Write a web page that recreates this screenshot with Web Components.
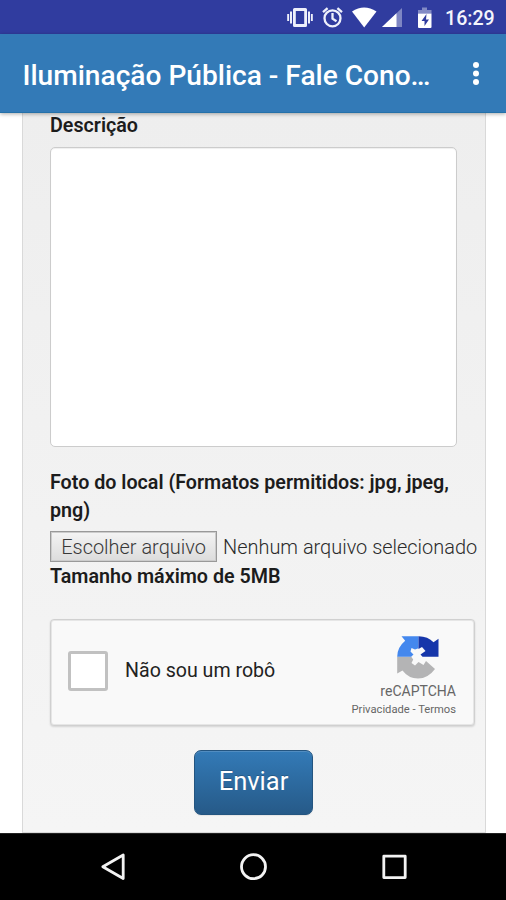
<!DOCTYPE html>
<html lang="pt-BR">
<head>
<meta charset="utf-8">
<title>Iluminação Pública - Fale Conosco</title>
<style>
body{margin:0;width:506px;height:900px;overflow:hidden;background:#fff;font-family:Roboto,"Liberation Sans",sans-serif}
</style>
</head>
<body>
<phone-screen>
  <status-bar slot="status" time="16:29"></status-bar>
  <app-bar slot="appbar">Iluminação Pública - Fale Cono…</app-bar>
  <form-panel>
    <field-label class="first">Descrição</field-label>
    <text-area></text-area>
    <field-label class="photo">Foto do local (Formatos permitidos: jpg, jpeg, png)</field-label>
    <file-picker button="Escolher arquivo">Nenhum arquivo selecionado</file-picker>
    <field-label class="hint">Tamanho máximo de 5MB</field-label>
    <captcha-box>Não sou um robô</captcha-box>
    <submit-button>Enviar</submit-button>
  </form-panel>
  <nav-bar slot="nav"></nav-bar>
</phone-screen>
<script>
const define = (name, html) => customElements.define(name, class extends HTMLElement {
  constructor() {
    super();
    this.attachShadow({mode: 'open'}).innerHTML = html;
  }
  connectedCallback() {
    this.shadowRoot.querySelectorAll('[data-attr]').forEach(e => {
      e.textContent = this.getAttribute(e.dataset.attr);
    });
  }
});

define('phone-screen', `<style>
:host{display:grid;grid-template-rows:34px 78.5px 720.5px 67px;width:506px;height:900px}
main{overflow:hidden;background:#fff;padding:0 20px 0 22px;box-sizing:border-box}
</style><slot name="status"></slot><slot name="appbar"></slot><main><slot></slot></main><slot name="nav"></slot>`);

define('status-bar', `<style>
:host{display:flex;align-items:center;justify-content:flex-end;background:#303c9f;color:#f4f5fc;padding-right:11px;box-sizing:border-box}
svg{display:block;flex:none}
span{font-size:19.6px;font-weight:500;line-height:34px;width:50px;white-space:nowrap;margin-top:3px}
</style>
<svg width="160" height="34" viewBox="280 0 160 34">
<g fill="#eef0fb">
<path fill-rule="evenodd" d="M294.500 8h11q1.500 0 1.500 1.500v16q0 1.500-1.500 1.500h-11q-1.500 0-1.500-1.500v-16q0-1.500 1.500-1.500zM295.800 11v13h8.400v-13z"/>
<path d="M290 11.500h2v12h-2zM287.200 14h1.900v7h-1.900zM308 11.500h2v12h-2zM310.900 14h1.900v7h-1.900z"/>
</g>
<g fill="none" stroke="#eef0fb" stroke-width="2.300"><circle cx="332.500" cy="18.300" r="8"/><path d="M332.500 13v5.600l4 2.600M323 12.200l4.600-4M342 12.200l-4.600-4"/></g>
<path fill="#fff" d="M352 11.500Q364 3.500 376.500 11.500L364.200 27.500z"/>
<path fill="#fff" opacity=".38" d="M382 27L402 8v19z"/>
<path fill="#fff" d="M382 27L396.500 13.200V27z"/>
<path fill="#fff" opacity=".4" d="M418 13.500v-3.500h4v-2.500h5v2.500h4.500v3.500z"/>
<path fill="#fff" fill-rule="evenodd" d="M418 13.500h13.500v13.500q0 1-1 1h-11.500q-1 0-1-1zM426.500 14l-5 7h3v5l4.500-6.500h-3z"/>
</svg><span style="margin-left:5px" data-attr="time"></span>`);

define('app-bar', `<style>
:host{display:flex;align-items:center;justify-content:space-between;background:#337ab7;color:#fff;padding:0 27px 0 22.5px;box-sizing:border-box;border-bottom:1.500px solid #2571a9;box-shadow:0 1px 4px #0005;position:relative;z-index:1}
h1{margin:6px 0 0;font-size:28.100px;font-weight:500;white-space:nowrap}
svg{display:block}
</style><h1><slot></slot></h1>
<svg width="6" height="24" viewBox="0 0 6 24" fill="#fff"><circle cx="3" cy="4" r="3"/><circle cx="3" cy="12.500" r="3"/><circle cx="3" cy="21" r="3"/></svg>`);

define('form-panel', `<style>
:host{display:flex;flex-direction:column;box-sizing:border-box;width:464px;height:720.5px;padding:0 0 0 27px;background:linear-gradient(#eee,#f5f5f5);border:solid #d9d9d9;border-width:0 1.500px 1px}
::slotted(.first){margin:-1px 0 1px}
::slotted(.photo){padding-top:22px;margin-bottom:-1px;width:410px}
::slotted(.hint){padding-top:1px;margin-bottom:-1px}
</style><slot></slot>`);

define('field-label', `<style>
:host{display:block;font-size:19.700px;font-weight:600;line-height:28px;color:#1c1c1c}
</style><slot></slot>`);

define('text-area', `<style>
:host{display:block;box-sizing:border-box;width:407px;height:300px;margin-top:6px;background:#fff;border:1.500px solid #ccc;border-radius:5px;box-shadow:inset 0 1px 1px #0001}
</style>`);

define('file-picker', `<style>
:host{display:flex;align-items:center;gap:6px;height:30px;margin-top:8px;font-size:19.950px;font-weight:300;color:#2b2b2b;white-space:nowrap}
button{box-sizing:border-box;width:167px;height:31px;padding:0;border:1px solid #999;box-shadow:inset 0 0 0 1px #ccc;background:linear-gradient(#f4f4f4,#dcdcdc);font:inherit;color:#383838}
</style><button data-attr="button"></button><span><slot></slot></span>`);

define('captcha-box', `<style>
:host{display:flex;box-sizing:border-box;width:425px;height:107px;margin-top:29px;background:#f9f9f9;border:1px solid #d0d0d0;border-radius:4px;box-shadow:inset 0 0 0 1px #e6e6e6,0 1px 2px #0002;padding:0 18px 0 17px;align-items:center}
i{box-sizing:border-box;width:40px;height:40px;margin-top:-3px;border:3px solid #c1c1c1;border-radius:3px;background:#fff}
span{font-size:19.6px;color:#222;margin:-4px 0 0 17px;white-space:nowrap}
div{display:flex;flex-direction:column;align-items:flex-end;margin-left:auto;height:100%;color:#666}
svg{margin:15px 16px 0 0}
b{font-weight:400;font-size:14px;line-height:16px;margin-top:4px}
small{font-size:11.200px;line-height:13px;margin-top:4px;white-space:nowrap}
</style><i></i><span><slot></slot></span>
<div><svg width="44" height="44" viewBox="396 635 44 44">
<path fill="#b4b4b5" d="M397.200 656.800h14l2 2.700-1.700 3.500 3.500 2.500 3.500-3.500 5 3 2.500-4 9 8Q428 678.500 418 678.500 408.500 678.500 402.500 670.500l-5.300 3z"/>
<path fill="#4488ee" d="M401.500 636.300h17v12l-3.500 1.200-3.500-1.500-1 3.500 3 3-2.300 2.300h-14q0-9.500 8-16z"/>
<path fill="#1636aa" d="M418.500 636.300q9.500 0 15 6l5-3.500v18h-16l-2-2.300 5-3.500-3.500-4-3.500 2z"/>
</svg><b>reCAPTCHA</b><small>Privacidade - Termos</small></div>`);

define('submit-button', `<style>
:host{display:block;margin:24px 0 0 144px}
button{box-sizing:border-box;width:119px;height:65px;padding:0 0 3px;border:1.500px solid #245580;border-radius:7px;background:linear-gradient(#337ab7,#265a88);color:#fff;font:400 25.500px Roboto,sans-serif;text-shadow:0 -1px 0 #0003;box-shadow:inset 0 1px 0 #ffffff26,0 1px 1px #0001}
</style><button type="button"><slot></slot></button>`);

define('nav-bar', `<style>
:host{display:flex;background:#000;justify-content:center;border-top:1px solid #222;box-sizing:border-box}
</style><svg width="506" height="66" viewBox="0 834 506 66" fill="none" stroke="#f3f3f3" stroke-width="2.800" stroke-linejoin="round"><path d="M123.200 855v23.500L102.800 866.800z"/><circle cx="253.500" cy="866.700" r="12"/><rect x="383.800" y="856.200" width="21.400" height="21.400"/></svg>`);
</script>
</body>
</html>
